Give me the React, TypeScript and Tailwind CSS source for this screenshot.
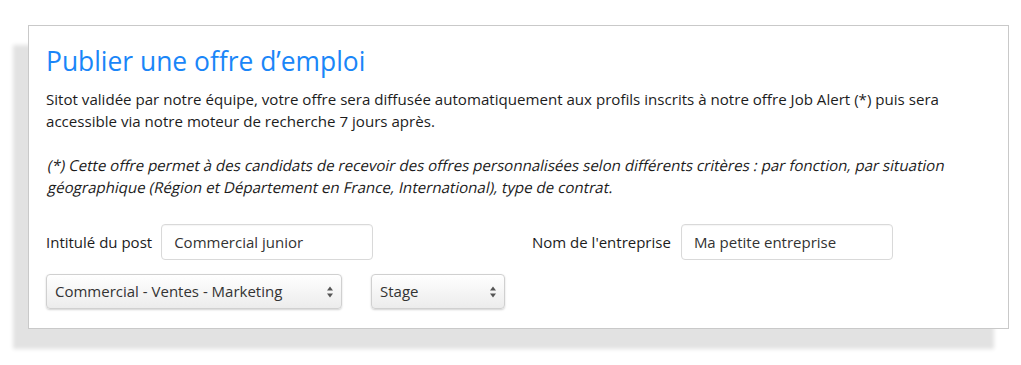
import React from "react";

function Arrows() {
  return (
    <svg width="8" height="14" viewBox="0 0 8 14" className="shrink-0">
      <path d="M4 1.5 L7 5.5 L1 5.5 Z" fill="#555" />
      <path d="M4 12.5 L7 8.5 L1 8.5 Z" fill="#555" />
    </svg>
  );
}

function FakeSelect({ value, width }: { value: string; width: string }) {
  return (
    <div
      className={`${width} h-[35px] flex items-center justify-between pl-[8px] pr-[7px] rounded-[4px] border border-[#d0d0d0] bg-gradient-to-b from-[#ffffff] to-[#ececec] shadow-[0_1px_2px_rgba(0,0,0,0.18)] text-[15px] text-[#333]`}
    >
      <span>{value}</span>
      <Arrows />
    </div>
  );
}

function TextInput({ value }: { value: string }) {
  return (
    <div className="w-[212px] h-[36px] flex items-center px-[12px] rounded-[4px] border border-[#d9d9d9] bg-white text-[15px] text-[#333] shadow-[inset_0_1px_1px_rgba(0,0,0,0.04)]">
      {value}
    </div>
  );
}

export default function App() {
  return (
    <div className="w-[1021px] h-[365px] bg-white pt-[25px] pl-[28px] font-['Open_Sans',sans-serif]">
      <div className="w-[981px] h-[304px] bg-white border border-[#c9c9c9] shadow-[-15px_20px_4px_#e2e2e2] pl-[17px] pr-[17px] pt-[19px] text-[#1c1c1c]">
        <h1 className="text-[26.4px] leading-[32px] text-[#1a86f8] font-normal">
          Publier une offre d’emploi
        </h1>
        <p className="mt-[11px] text-[15.1px] leading-[22px]">
          Sitot validée par notre équipe, votre offre sera diffusée automatiquement aux profils inscrits à notre offre Job Alert (*) puis sera accessible via notre moteur de recherche 7 jours après.
        </p>
        <div className="mt-[22px] text-[15.1px] leading-[22px]">
          <span className="block -skew-x-12 origin-bottom-left">
            (*) Cette offre permet à des candidats de recevoir des offres personnalisées selon différents critères : par fonction, par situation
          </span>
          <span className="block -skew-x-12 origin-bottom-left">
            géographique (Région et Département en France, International), type de contrat.
          </span>
        </div>
        <div className="mt-[26px] flex items-center text-[15px]">
          <div className="w-[486px] flex items-center gap-[9px]">
            <span>Intitulé du post</span>
            <TextInput value="Commercial junior" />
          </div>
          <div className="flex items-center gap-[10px]">
            <span>Nom de l'entreprise</span>
            <TextInput value="Ma petite entreprise" />
          </div>
        </div>
        <div className="mt-[14px] flex items-center gap-[29px]">
          <FakeSelect value="Commercial - Ventes - Marketing" width="w-[296px]" />
          <FakeSelect value="Stage" width="w-[134px]" />
        </div>
      </div>
    </div>
  );
}
